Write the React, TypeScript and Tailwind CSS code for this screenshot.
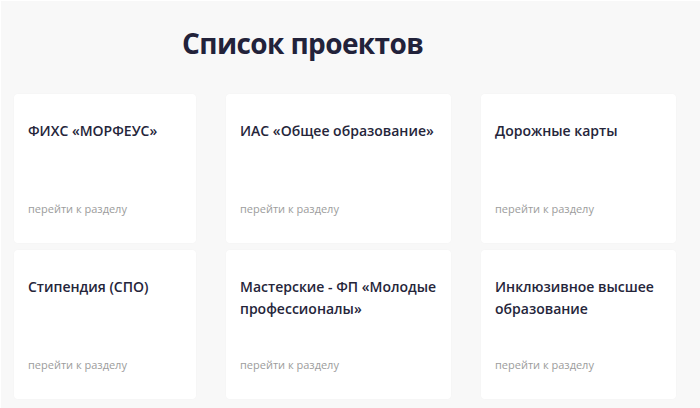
import React from "react";

const items: string[][] = [
  ["ФИХС «МОРФЕУС»"],
  ["ИАС «Общее образование»"],
  ["Дорожные карты"],
  ["Стипендия (СПО)"],
  ["Мастерские - ФП «Молодые", "профессионалы»"],
  ["Инклюзивное высшее", "образование"],
];

export default function App() {
  return (
    <div
      className="w-[700px] h-[408px] bg-[#f8f8f8] border-t border-l border-white overflow-hidden"
      style={{ fontFamily: '"Open Sans", sans-serif' }}
    >
      <h1 className="pl-[181px] pt-[22px] text-[28px] leading-[40px] font-bold text-[#22223a] tracking-[-0.6px]">
        Список проектов
      </h1>
      <div className="mt-[31px] ml-[13px] grid grid-cols-[182px_225px_195px] gap-x-[30px] gap-y-[7px]">
        {items.map((lines, i) => (
          <div
            key={i}
            className="h-[149px] bg-white rounded-[4px] shadow-[0_0_2px_rgba(0,0,0,0.03)] pl-[14px] pr-[10px] pt-[26px] pb-[26px] flex flex-col justify-between"
          >
            <div className="text-[14px] leading-[22px] font-semibold text-[#25253a]">
              {lines.map((l, j) => (
                <div key={j} className="whitespace-nowrap">{l}</div>
              ))}
            </div>
            <div className="text-[11px] leading-[16px] text-[#9c9c9c]">перейти к разделу</div>
          </div>
        ))}
      </div>
    </div>
  );
}
